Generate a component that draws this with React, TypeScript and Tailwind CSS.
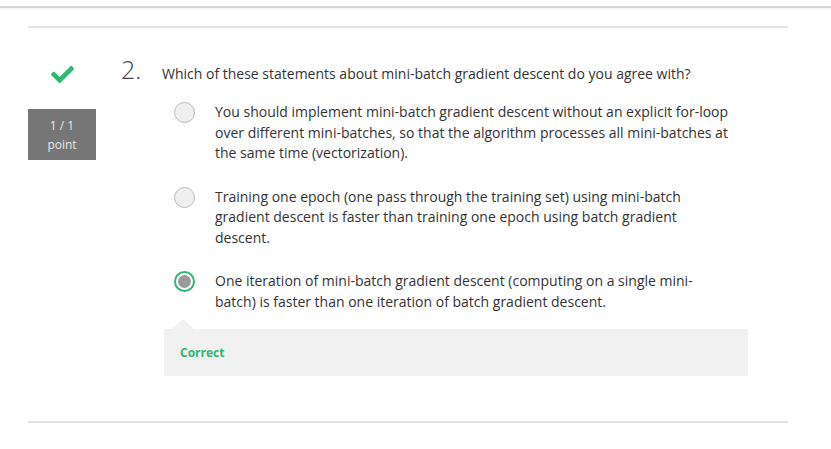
import { FaCheck } from "react-icons/fa";

const options = [
  {
    text: "You should implement mini-batch gradient descent without an explicit for-loop over different mini-batches, so that the algorithm processes all mini-batches at the same time (vectorization).",
    selected: false,
  },
  {
    text: "Training one epoch (one pass through the training set) using mini-batch gradient descent is faster than training one epoch using batch gradient descent.",
    selected: false,
  },
  {
    text: "One iteration of mini-batch gradient descent (computing on a single mini-batch) is faster than one iteration of batch gradient descent.",
    selected: true,
  },
];

function Radio({ selected }: { selected: boolean }) {
  if (selected) {
    return (
      <div className="flex h-[21px] w-[21px] shrink-0 items-center justify-center rounded-full border-[2px] border-[#2eb872] bg-white">
        <div className="h-[13px] w-[13px] rounded-full bg-[#9a9a9a]" />
      </div>
    );
  }
  return (
    <div className="h-[21px] w-[21px] shrink-0 rounded-full border border-[#b9b9b9] bg-[#efefef]" />
  );
}

export default function App() {
  return (
    <div className="min-h-[449px] bg-white pt-[6px] font-['Open_Sans',sans-serif] text-[#333]">
      <div className="h-[2px] bg-[#d4d4d4] shadow-[0_1px_2px_rgba(0,0,0,0.06)]" />

      <div className="mx-[28px] mt-[18px] w-[760px] border-t-2 border-[#e3e3e3] pt-[27px]">
        <div className="flex">
          {/* left column */}
          <div className="flex w-[68px] shrink-0 flex-col items-center">
            <FaCheck className="mt-[8px] h-[23px] w-[23px] text-[#2eb872]" />
            <div className="mt-[23px] flex h-[51px] w-[68px] flex-col items-center justify-center bg-[#767676] text-[12px] leading-[19px] text-[#e6e6e6]">
              <span>1 / 1</span>
              <span>point</span>
            </div>
          </div>

          {/* question */}
          <div className="flex-1">
            <div className="-mt-[3px] flex items-baseline">
              <span className="ml-[25px] w-[41px] text-[25px] font-light leading-[34px] text-[#444]">
                2.
              </span>
              <span className="text-[14px] text-[#333]">
                Which of these statements about mini-batch gradient descent do you agree with?
              </span>
            </div>

            <div className="ml-[78px] mt-[16px] flex flex-col gap-[23px]">
              {options.map((o, i) => (
                <div key={i} className="flex gap-[20px]">
                  <Radio selected={o.selected} />
                  <p className="w-[515px] text-[14px] leading-[20.5px] text-[#333]">{o.text}</p>
                </div>
              ))}
            </div>

            <div className="relative ml-[68px] mt-[17px] h-[47px] w-[584px] bg-[#f1f1f1]">
              <div className="absolute left-[8px] top-[-10px] h-0 w-0 border-x-[11px] border-b-[10px] border-x-transparent border-b-[#f1f1f1]" />
              <p className="pl-[16px] pt-[15px] text-[12px] font-bold text-[#2eb872]">Correct</p>
            </div>
          </div>
        </div>

        <div className="mt-[45px] h-[2px] bg-[#e3e3e3]" />
      </div>
    </div>
  );
}
